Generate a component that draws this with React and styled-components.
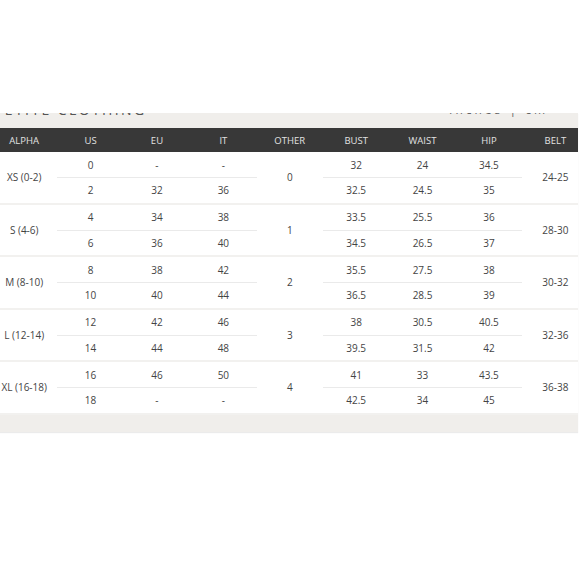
import React from "react";
import styled, { createGlobalStyle } from "styled-components";

const Global = createGlobalStyle`
  html, body { margin: 0; padding: 0; background: #fff; overflow: hidden; }
  body { font-family: "Open Sans", "Noto Sans", sans-serif; }
`;

const COL = 66.4;

const Page = styled.div`
  width: 580px;
  height: 580px;
  padding-top: 113px;
  box-sizing: border-box;
  overflow: hidden;
`;

const Panel = styled.div`
  width: 578px;
  background: #f0eeeb;
  box-shadow: 0 1px 1px rgba(0, 0, 0, 0.08);
  overflow: hidden;
`;

const TitleBar = styled.div`
  height: 15px;
  overflow: hidden;
  display: flex;
  justify-content: space-between;
  align-items: flex-start;
  color: #555;
`;

const Title = styled.span`
  margin-top: -12.5px;
  margin-left: -6px;
  font-size: 14px;
  letter-spacing: 2.4px;
  line-height: 18px;
  white-space: nowrap;
`;

const Units = styled.span`
  margin-top: -11.5px;
  margin-right: 30px;
  font-size: 12px;
  letter-spacing: 3px;
  line-height: 16px;
  white-space: nowrap;
  color: #666;
`;

const Table = styled.div`
  width: ${COL * 9}px;
  margin-left: -9px;
  background: #fff;
`;

const HeaderRow = styled.div`
  display: grid;
  grid-template-columns: repeat(9, ${COL}px);
  height: 24px;
  align-items: center;
  background: #383838;
  color: #e2e2e2;
  font-size: 9.5px;
  text-align: center;
`;

const Group = styled.div`
  display: grid;
  grid-template-columns: repeat(9, ${COL}px);
  grid-template-rows: 26px 24.5px;
  height: 50.5px;
  border-bottom: 2px solid #f2f1ef;
  color: #444;
  font-size: 10px;
`;

const SpanCell = styled.div`
  grid-row: 1 / span 2;
  grid-column: ${(p) => p.$col};
  display: flex;
  align-items: center;
  justify-content: center;
  white-space: nowrap;
`;

const Cell = styled.div`
  grid-column: ${(p) => p.$col};
  grid-row: ${(p) => p.$row};
  display: flex;
  align-items: center;
  justify-content: center;
  box-sizing: border-box;
  border-bottom: ${(p) => (p.$row === 1 ? "1px solid #eaeaea" : "0")};
`;

const Footer = styled.div`
  height: 17px;
`;

const headers = ["ALPHA", "US", "EU", "IT", "OTHER", "BUST", "WAIST", "HIP", "BELT"];

const groups = [
  { alpha: "XS (0-2)", other: "0", belt: "24-25", rows: [["0", "-", "-", "32", "24", "34.5"], ["2", "32", "36", "32.5", "24.5", "35"]] },
  { alpha: "S (4-6)", other: "1", belt: "28-30", rows: [["4", "34", "38", "33.5", "25.5", "36"], ["6", "36", "40", "34.5", "26.5", "37"]] },
  { alpha: "M (8-10)", other: "2", belt: "30-32", rows: [["8", "38", "42", "35.5", "27.5", "38"], ["10", "40", "44", "36.5", "28.5", "39"]] },
  { alpha: "L (12-14)", other: "3", belt: "32-36", rows: [["12", "42", "46", "38", "30.5", "40.5"], ["14", "44", "48", "39.5", "31.5", "42"]] },
  { alpha: "XL (16-18)", other: "4", belt: "36-38", rows: [["16", "46", "50", "41", "33", "43.5"], ["18", "-", "-", "42.5", "34", "45"]] },
];

const cols = [2, 3, 4, 6, 7, 8];

export default function App() {
  return (
    <>
      <Global />
      <Page>
        <Panel>
          <TitleBar>
            <Title>PETITE CLOTHING</Title>
            <Units>Inches | cm</Units>
          </TitleBar>
          <Table>
            <HeaderRow>
              {headers.map((h) => (
                <div key={h}>{h}</div>
              ))}
            </HeaderRow>
            {groups.map((g) => (
              <Group key={g.alpha}>
                <SpanCell $col={1}>{g.alpha}</SpanCell>
                {g.rows.map((r, ri) =>
                  r.map((v, ci) => (
                    <Cell key={`${ri}-${ci}`} $row={ri + 1} $col={cols[ci]}>
                      {v}
                    </Cell>
                  ))
                )}
                <SpanCell $col={5}>{g.other}</SpanCell>
                <SpanCell $col={9}>{g.belt}</SpanCell>
              </Group>
            ))}
          </Table>
          <Footer />
        </Panel>
      </Page>
    </>
  );
}
